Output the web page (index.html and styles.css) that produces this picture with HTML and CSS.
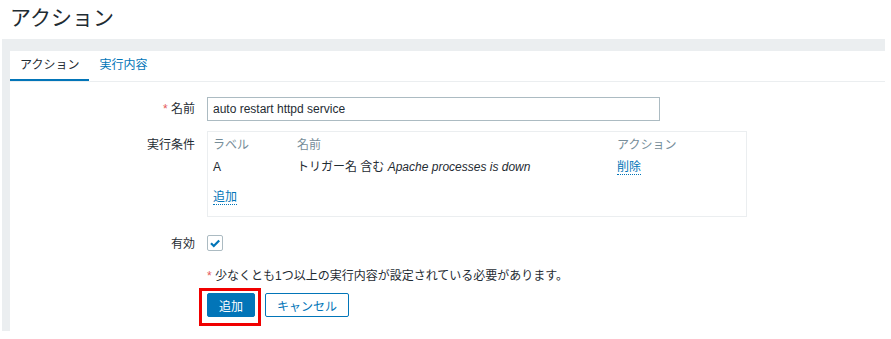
FILE: index.html
```html
<!DOCTYPE html>
<html lang="ja">
<head>
  <meta charset="UTF-8" />
  <title>アクション</title>
  <link rel="stylesheet" href="styles.css">
</head>
<body>
  <header class="page-title">
    <h1>アクション</h1>
  </header>

  <div class="page-body">
    <div class="panel">
      <ul class="tabs">
        <li class="tab active"><a href="#">アクション</a></li>
        <li class="tab"><a href="#">実行内容</a></li>
      </ul>

      <form class="form">
        <div class="row">
          <label class="row-label" for="name"><span class="req">*</span> 名前</label>
          <div class="row-field">
            <input type="text" id="name" class="text-input" value="auto restart httpd service" />
          </div>
        </div>

        <div class="row row-cond">
          <label class="row-label">実行条件</label>
          <div class="row-field">
            <div class="cond-box">
              <div class="cond-grid">
                <div class="cond-head">ラベル</div>
                <div class="cond-head">名前</div>
                <div class="cond-head">アクション</div>
                <div class="cond-cell">A</div>
                <div class="cond-cell">トリガー名 含む <i>Apache processes is down</i></div>
                <div class="cond-cell"><a href="#" class="link">削除</a></div>
              </div>
              <div class="cond-add"><a href="#" class="link">追加</a></div>
            </div>
          </div>
        </div>

        <div class="row row-check">
          <label class="row-label" for="enabled">有効</label>
          <div class="row-field">
            <span class="checkbox" id="enabled">
              <svg width="14" height="14" viewBox="0 0 14 14">
                <path d="M3 7.2 L5.8 10 L11.2 4.4" fill="none" stroke="#0275b8" stroke-width="2.2" />
              </svg>
            </span>
          </div>
        </div>

        <div class="row row-note">
          <div class="row-label"></div>
          <div class="row-field"><span class="req">*</span> 少なくとも1つ以上の実行内容が設定されている必要があります。</div>
        </div>

        <div class="row row-buttons">
          <div class="row-label"></div>
          <div class="row-field btn-group">
            <span class="mark-wrap">
              <button type="button" class="btn btn-primary">追加</button>
              <span class="mark"></span>
            </span>
            <button type="button" class="btn btn-alt">キャンセル</button>
          </div>
        </div>
      </form>
    </div>
  </div>
</body>
</html>
```

FILE: styles.css
```css
body {
  margin: 0;
  font-family: "Liberation Sans", Arial, "Noto Sans CJK JP", sans-serif;
  font-size: 12px;
  color: #1f2c33;
  background-color: white;
}
.page-title {
  height: 39px;
  padding-left: 10px;
}
.page-title h1 {
  margin: 0;
  font-size: 21px;
  font-weight: normal;
  line-height: 35px;
}
.page-body {
  margin-left: 2px;
  width: 875px;
  height: 280px;
  padding: 12px 0 0 8px;
  background-color: #ebeef0;
}
.panel {
  background-color: white;
  height: 100%;
}
.tabs {
  display: flex;
  margin: 0;
  padding: 0;
  list-style: none;
  border-bottom: 1px solid #ebeef0;
}
.tab a {
  display: block;
  padding: 0 10px;
  line-height: 28px;
  border-bottom: 2px solid transparent;
  color: #0275b8;
  text-decoration: none;
}
.tab.active a {
  color: #1f2c33;
  border-bottom-color: #0275b8;
}
.form {
  padding-top: 15px;
}
.row {
  display: grid;
  grid-template-columns: 185px 1fr;
  column-gap: 12px;
  margin-bottom: 10px;
}
.row-label {
  text-align: right;
  line-height: 24px;
}
.req {
  color: #e45959;
}
.text-input {
  box-sizing: border-box;
  width: 453px;
  height: 24px;
  padding: 0 5px;
  border: 1px solid #acbbc2;
  font-family: inherit;
  font-size: 12px;
  color: #1f2c33;
}
.row-cond .row-label {
  line-height: 20px;
  padding-top: 4px;
}
.cond-box {
  box-sizing: border-box;
  width: 540px;
  height: 86px;
  padding: 3px 5px 7px;
  border: 1px solid #ebeef0;
}
.cond-grid {
  display: grid;
  grid-template-columns: 84px 320px 1fr;
}
.cond-head {
  line-height: 20px;
  color: #768d99;
}
.cond-cell {
  line-height: 24px;
}
.cond-add {
  margin-top: 6px;
  line-height: 24px;
}
.link {
  color: #0275b8;
  text-decoration: none;
  border-bottom: 1px dotted #0275b8;
}
.row-check {
  margin-top: 18px;
}
.row-check .row-label {
  line-height: 18px;
}
.checkbox {
  display: flex;
  align-items: center;
  justify-content: center;
  box-sizing: border-box;
  width: 16px;
  height: 16px;
  border: 1px solid #acbbc2;
  border-radius: 2px;
}
.row-note {
  margin-top: 15px;
  line-height: 16px;
  margin-bottom: 9px;
}
.btn-group {
  display: flex;
  gap: 10px;
}
.mark-wrap {
  position: relative;
}
.btn {
  height: 24px;
  padding: 0 11px;
  border: 1px solid #0275b8;
  border-radius: 2px;
  font-family: inherit;
  font-size: 12px;
}
.btn-primary {
  background-color: #0275b8;
  color: white;
}
.btn-alt {
  background-color: white;
  color: #0275b8;
}
.mark {
  position: absolute;
  left: -8px;
  top: -5px;
  width: 56px;
  height: 32px;
  border: 3px solid #f00000;
}
```
